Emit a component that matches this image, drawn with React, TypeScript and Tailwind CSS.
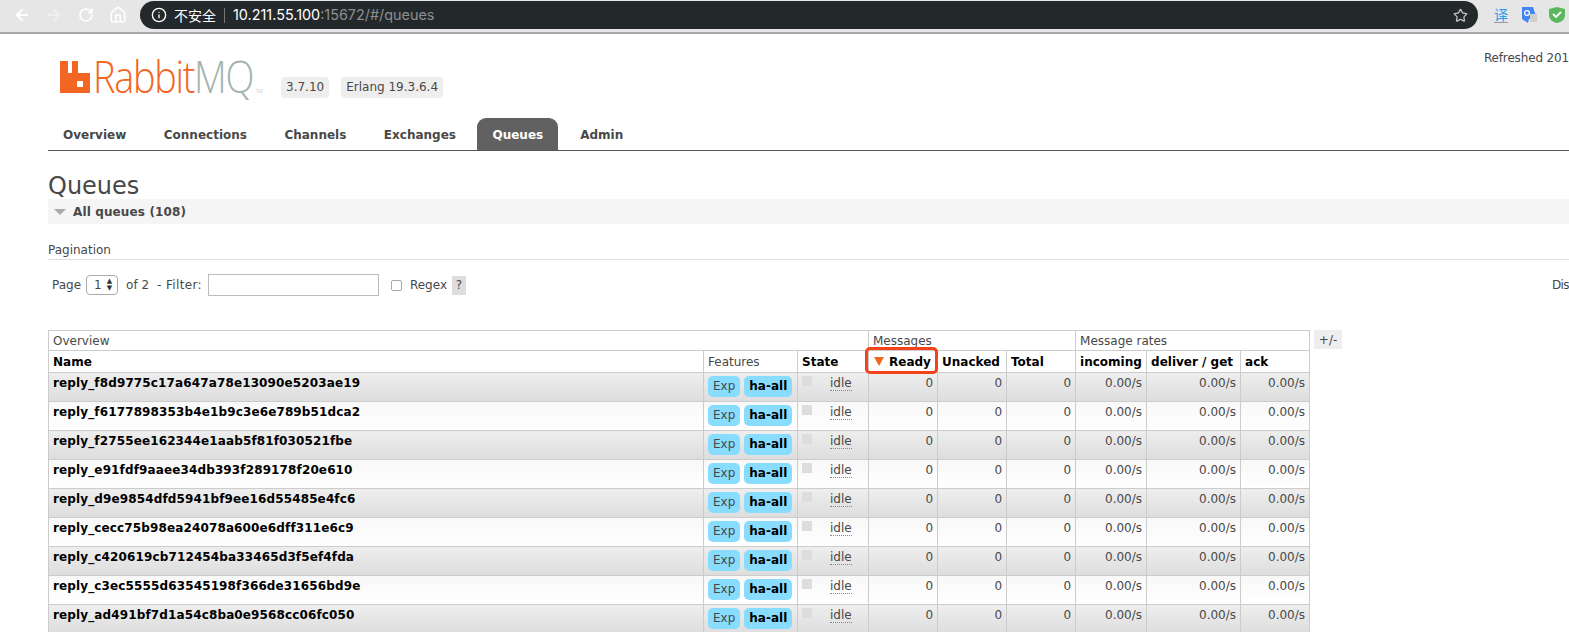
import { ArrowLeft, ArrowRight, RotateCw, Home, Info, Star } from "lucide-react";

const queues = [
  "reply_f8d9775c17a647a78e13090e5203ae19",
  "reply_f6177898353b4e1b9c3e6e789b51dca2",
  "reply_f2755ee162344e1aab5f81f030521fbe",
  "reply_e91fdf9aaee34db393f289178f20e610",
  "reply_d9e9854dfd5941bf9ee16d55485e4fc6",
  "reply_cecc75b98ea24078a600e6dff311e6c9",
  "reply_c420619cb712454ba33465d3f5ef4fda",
  "reply_c3ec5555d63545198f366de31656bd9e",
  "reply_ad491bf7d1a54c8ba0e9568cc06fc050",
];

const tabs = ["Overview", "Connections", "Channels", "Exchanges", "Queues", "Admin"];

function BrowserBar() {
  return (
    <div className="flex h-[34px] items-start border-b-2 border-[#a8a8a8] bg-[#e6e6e6]">
      <div className="flex h-[30px] w-[140px] shrink-0 items-center text-white">
        <ArrowLeft size={18} strokeWidth={2.4} className="ml-[13px]" />
        <ArrowRight size={18} strokeWidth={2.4} className="ml-[14px] opacity-40" />
        <RotateCw size={16} strokeWidth={2.6} className="ml-[15px]" />
        <Home size={18} strokeWidth={2.2} className="ml-[15px]" />
      </div>
      <div className="mt-px flex h-[28px] w-[1338px] shrink-0 items-center rounded-full bg-[#23282b] pr-[10px] pl-[11px] font-['Inter',sans-serif] text-[14.4px] text-white">
        <Info size={16} className="shrink-0" />
        <span className="ml-[7px] font-['Noto_Sans_CJK_SC',sans-serif] text-[14px]">不安全</span>
        <span className="mx-[8px] h-[15px] w-px bg-[#777]" />
        <span>10.211.55.100</span>
        <span className="text-[#8b8f92]">:15672/#/queues</span>
        <Star size={15} className="ml-auto text-[#c4c6c7]" />
      </div>
      <div className="ml-[12px] flex h-[30px] w-[22px] shrink-0 flex-col items-center justify-center">
        <span className="font-['Noto_Sans_CJK_SC',sans-serif] text-[14px] leading-[15px] text-[#2b9bf0]">译</span>
        <span className="h-px w-[14px] bg-[#999]" />
      </div>
      <svg width="18" height="18" viewBox="0 0 18 18" className="mt-[6px] ml-[9px] shrink-0">
        <path d="M1 1h11l4 12H8l-1 4-6-4z" fill="#4285f4" />
        <path d="M9 8h7v8H9z" fill="#cfcfcf" />
        <circle cx="6" cy="7" r="2.4" fill="none" stroke="#fff" strokeWidth="1.2" />
      </svg>
      <svg width="18" height="18" viewBox="0 0 18 18" className="mt-[6px] ml-[9px] shrink-0">
        <path d="M9 1l8 2v6c0 4-3 7-8 8-5-1-8-4-8-8V3z" fill="#5cb85c" />
        <path d="M5 8l3 3 5-5" fill="none" stroke="#fff" strokeWidth="1.8" />
      </svg>
    </div>
  );
}

function Logo() {
  return (
    <div className="flex h-[36px] w-[204px] items-center">
      <svg width="30" height="32" viewBox="0 0 30 32" className="shrink-0">
        <path
          fillRule="evenodd"
          d="M0 0h8v12h4V0h6v12h12v20H0zM17 20v6h6v-6z"
          fill="#f26522"
        />
      </svg>
      <span className="ml-[3px] -mt-[2px] flex origin-left scale-x-[0.86] items-baseline font-['Open_Sans',sans-serif] text-[44px] leading-none font-light tracking-[-1.5px] whitespace-nowrap text-[#f26522]">
        Rabbit<span className="text-[#a4b3ae]">MQ</span>
        <span className="ml-[3px] text-[6px] tracking-normal text-[#a4b3ae]">TM</span>
      </span>
    </div>
  );
}

function Badge({ children }: { children: React.ReactNode }) {
  return <span className="rounded-[4px] bg-[#eeeeee] px-[5px] py-[2px] text-[12px] leading-[17px]">{children}</span>;
}

export default function App() {
  const th = "border border-[#cccccc] px-[4px] pt-px text-left align-middle";
  const num = "border border-[#cccccc] px-[4px] pt-[3px] align-top text-right text-[#484848]";

  return (
    <div className="h-[632px] w-[1569px] overflow-hidden bg-white font-['DejaVu_Sans',sans-serif] text-[12px] text-[#484848]">
      <BrowserBar />
      <div className="ml-[48px]">
        <div className="flex h-[83px] items-start">
          <div className="mt-[25px] ml-[12px]">
            <Logo />
          </div>
          <div className="mt-[43px] flex gap-[12px] pl-[17px]">
            <Badge>3.7.10</Badge>
            <Badge>Erlang 19.3.6.4</Badge>
          </div>
          <span className="mt-[15px] ml-auto tracking-[-0.15px] whitespace-nowrap">Refreshed 201</span>
        </div>

        <div className="flex h-[34px] items-end border-b border-[#555] font-bold text-[#484848]">
          {tabs.map((t) => (
            <span
              key={t}
              className={
                t === "Queues"
                  ? "mr-[7px] -ml-px flex h-[32px] items-center rounded-t-[9px] bg-[#616161] px-[15px] pt-[2px] text-white"
                  : "mr-[7.5px] flex h-[32px] items-center px-[15px] pt-[2px]"
              }
            >
              {t}
            </span>
          ))}
        </div>

        <h1 className="mt-[21px] h-[27px] text-[24px] leading-[29px] text-[#484848]">Queues</h1>
        <div className="flex h-[25px] items-center bg-[#f5f5f5] pl-[6px] font-bold">
          <span className="h-0 w-0 border-x-[6px] border-t-[6px] border-x-transparent border-t-[#aaaaaa]" />
          <span className="ml-[7px] tracking-[0.13px]">All queues (108)</span>
        </div>

        <div className="mt-[19px] h-[17px] border-b border-[#dddddd] pb-[2px] text-[12px] leading-[14px]">Pagination</div>

        <div className="mt-[14px] flex h-[22px] items-center pl-[4px]">
          <span>Page</span>
          <span className="ml-[5px] flex h-[20px] w-[32px] items-center rounded-[4px] border border-[#aaaaaa] pl-[7px] text-[12px]">
            1
            <span className="ml-[5px] text-[7px] leading-[7px] text-[#333]">
              ▲
              <br />▼
            </span>
          </span>
          <span className="ml-[8px]">of 2</span>
          <span className="ml-[8px] tracking-[0.35px]">- Filter:</span>
          <span className="ml-[6px] h-[22px] w-[171px] border border-[#bbbbbb]" />
          <span className="ml-[12px] h-[11px] w-[11px] rounded-[2px] border border-[#aaaaaa]" />
          <span className="ml-[8px]">Regex</span>
          <span className="ml-[5px] flex h-[19px] w-[14px] items-center justify-center bg-[#dddddd]">?</span>
          <span className="ml-auto tracking-[-0.6px] whitespace-nowrap">Dis</span>
        </div>

        <div className="mt-[34px] flex items-start">
          <table className="w-[1261px] table-fixed border-collapse leading-[15px]">
            <colgroup>
              <col className="w-[655px]" />
              <col className="w-[94px]" />
              <col className="w-[71px]" />
              <col className="w-[69px]" />
              <col className="w-[69px]" />
              <col className="w-[69px]" />
              <col className="w-[71px]" />
              <col className="w-[94px]" />
              <col className="w-[69px]" />
            </colgroup>
            <thead>
              <tr className="h-[20px]">
                <th colSpan={3} className={`${th} font-normal`}>Overview</th>
                <th colSpan={3} className={`${th} font-normal`}>Messages</th>
                <th colSpan={3} className={`${th} font-normal`}>Message rates</th>
              </tr>
              <tr className="h-[22px] font-bold text-black">
                <th className={th}>Name</th>
                <th className={`${th} font-normal text-[#484848]`}>Features</th>
                <th className={th}>State</th>
                <th className={`${th} relative whitespace-nowrap`}>
                  <span className="ml-[1px] inline-block h-0 w-0 border-x-[5px] border-t-[9px] border-x-transparent border-t-[#f26522]" />
                  <span className="ml-[5px]">Ready</span>
                  <span className="absolute top-[-4px] left-[-4px] h-[27px] w-[73px] rounded-[5px] border-[3px] border-[#f5421a]" />
                </th>
                <th className={th}>Unacked</th>
                <th className={th}>Total</th>
                <th className={th}>incoming</th>
                <th className={`${th} whitespace-nowrap`}>deliver / get</th>
                <th className={th}>ack</th>
              </tr>
            </thead>
            <tbody>
              {queues.map((q, i) => (
                <tr
                  key={q}
                  className={`h-[29px] ${i % 2 === 0 ? "bg-gradient-to-b from-[#eeeeee] to-[#dddddd]" : "bg-gradient-to-b from-[#f8f8f8] to-[#ffffff]"}`}
                >
                  <td className="border border-[#cccccc] px-[4px] pt-[3px] align-top font-bold tracking-[0.13px] text-black">{q}</td>
                  <td className="border border-[#cccccc] px-[4px] pt-[3px] align-top">
                    <div className="flex gap-[4px]">
                      <span className="rounded-[5px] bg-[#88ddff] px-[5px] py-[2px] leading-[17px]">Exp</span>
                      <span className="rounded-[5px] bg-[#88ddff] px-[5px] py-[2px] leading-[17px] font-bold text-black">ha-all</span>
                    </div>
                  </td>
                  <td className="border border-[#cccccc] px-[4px] pt-[3px] align-top">
                    <div className="flex">
                      <span className="h-[10px] w-[10px] bg-[#dddddd]" />
                      <span className="ml-[18px] border-b border-dotted border-[#888] leading-[14px]">idle</span>
                    </div>
                  </td>
                  <td className={num}>0</td>
                  <td className={num}>0</td>
                  <td className={num}>0</td>
                  <td className={num}>0.00/s</td>
                  <td className={num}>0.00/s</td>
                  <td className={num}>0.00/s</td>
                </tr>
              ))}
            </tbody>
          </table>
          <span className="ml-[4px] flex h-[19px] w-[28px] items-center justify-center bg-[#eeeeee]">+/-</span>
        </div>
      </div>
    </div>
  );
}
